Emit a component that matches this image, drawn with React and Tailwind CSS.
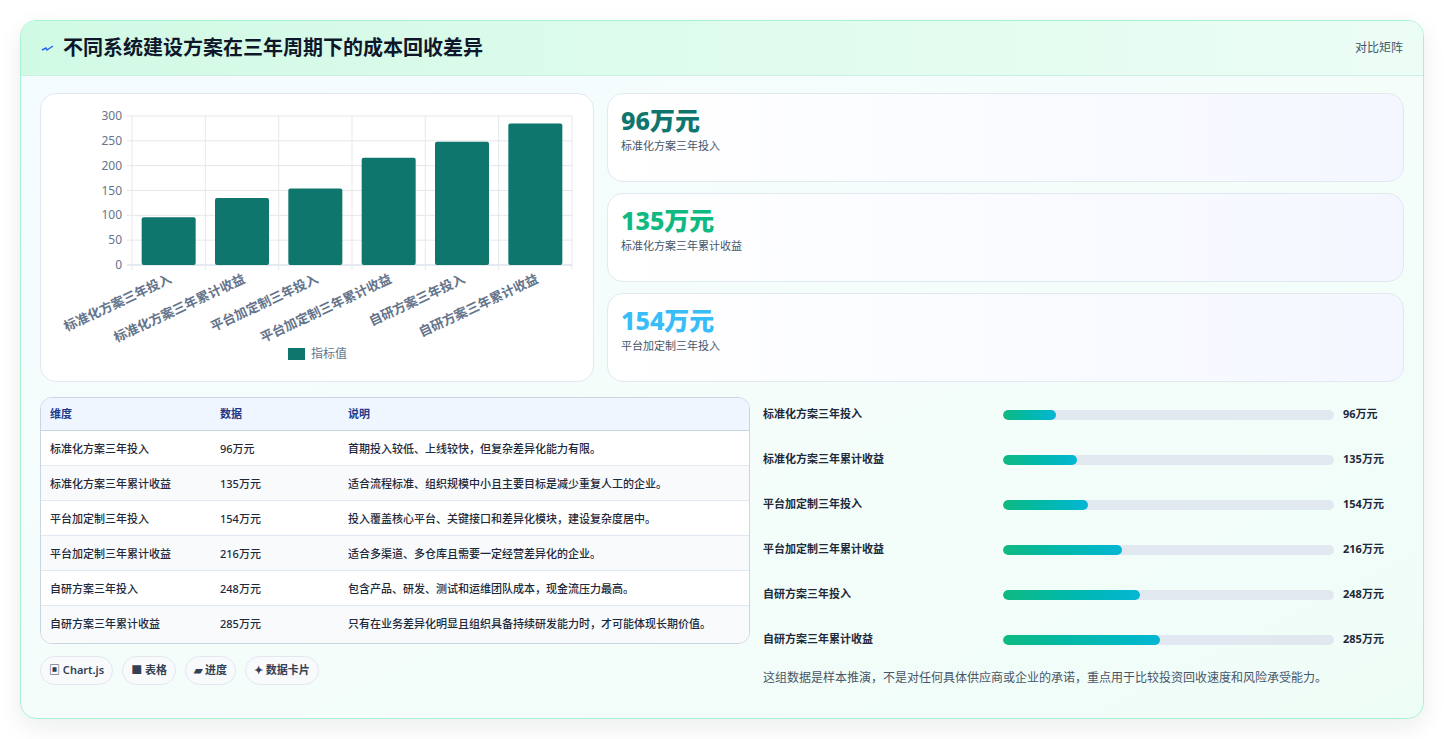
import React from "react";

const rows = [
  ["标准化方案三年投入", 96, "首期投入较低、上线较快，但复杂差异化能力有限。"],
  ["标准化方案三年累计收益", 135, "适合流程标准、组织规模中小且主要目标是减少重复人工的企业。"],
  ["平台加定制三年投入", 154, "投入覆盖核心平台、关键接口和差异化模块，建设复杂度居中。"],
  ["平台加定制三年累计收益", 216, "适合多渠道、多仓库且需要一定经营差异化的企业。"],
  ["自研方案三年投入", 248, "包含产品、研发、测试和运维团队成本，现金流压力最高。"],
  ["自研方案三年累计收益", 285, "只有在业务差异化明显且组织具备持续研发能力时，才可能体现长期价值。"],
];

function Chart() {
  const x0 = 91, x1 = 531, yTop = 22, yBot = 171;
  const step = (x1 - x0) / 6;
  const ys = [0, 50, 100, 150, 200, 250, 300];
  const yOf = (v) => yBot - (v / 300) * (yBot - yTop);
  return (
    <svg width="553" height="288" className="block">
      {ys.map((v) => (
        <g key={v}>
          <line x1={x0 - 5} x2={x1} y1={yOf(v)} y2={yOf(v)} stroke={v === 0 ? "#cbd5e1" : "#e5e7eb"} />
          <text x={x0 - 10} y={yOf(v) + 4} textAnchor="end" fontSize="12" fill="#64748b">{v}</text>
        </g>
      ))}
      {Array.from({ length: 7 }).map((_, i) => (
        <line key={i} x1={x0 + i * step} x2={x0 + i * step} y1={yTop} y2={yBot + 5} stroke="#e5e7eb" />
      ))}
      {rows.map((r, i) => {
        const cx = x0 + step * (i + 0.5);
        const y = yOf(r[1]);
        return (
          <g key={i}>
            <rect x={cx - 27} y={y} width="54" height={yBot - y} rx="2" fill="#0f766e" />
            <text transform={`translate(${cx + 4},${yBot + 17}) rotate(-25)`} textAnchor="end" fontSize="13" fontWeight="600" fill="#64748b">{r[0]}</text>
          </g>
        );
      })}
      <rect x="247" y="254" width="17" height="12" fill="#0f766e" />
      <text x="270" y="264" fontSize="12" fill="#64748b">指标值</text>
    </svg>
  );
}

function Stat({ v, label, color }) {
  return (
    <div className="flex-1 rounded-2xl border border-[#e2e8f0] bg-gradient-to-r from-white to-[#f4f7ff] px-[13px] pt-[9px]">
      <div className={`text-[25px] font-extrabold leading-[34px] ${color}`}>{v}</div>
      <div className="text-[11px] text-[#475569] mt-[1px]">{label}</div>
    </div>
  );
}

export default function App() {
  return (
    <div className="w-[1444px] h-[739px] bg-white p-[20px]" style={{ fontFamily: '"Noto Sans","Noto Sans CJK SC",sans-serif' }}>
      <div className="h-[699px] rounded-2xl border border-[#a7f3d0] bg-gradient-to-br from-[#f3fbff] via-[#f5fdfb] to-[#effdf7] shadow-[0_8px_24px_rgba(15,23,42,0.08)] overflow-hidden">
        <div className="h-[55px] flex items-center justify-between px-[20px] bg-gradient-to-r from-[#d1fae5] to-[#ecfdf5] border-b border-[#ccf0e4]">
          <div className="flex items-center gap-[9px]">
            <svg width="13" height="10" viewBox="0 0 13 10"><path d="M1 7 L5 5 L6 7 L12 3" stroke="#2563eb" strokeWidth="1.4" fill="none" /></svg>
            <span className="text-[20px] font-bold text-[#0f172a]">不同系统建设方案在三年周期下的成本回收差异</span>
          </div>
          <span className="text-[12px] text-[#475569]">对比矩阵</span>
        </div>
        <div className="px-[19px] pt-[17px]">
          <div className="flex gap-[13px] h-[289px]">
            <div className="w-[554px] rounded-2xl border border-[#e2e8f0] bg-white overflow-hidden">
              <Chart />
            </div>
            <div className="flex-1 flex flex-col gap-[11px]">
              <Stat v="96万元" label="标准化方案三年投入" color="text-[#0f766e]" />
              <Stat v="135万元" label="标准化方案三年累计收益" color="text-[#10b981]" />
              <Stat v="154万元" label="平台加定制三年投入" color="text-[#38bdf8]" />
            </div>
          </div>
          <div className="flex gap-[13px] mt-[15px]">
            <div className="w-[710px]">
              <div className="rounded-xl border border-[#cbd5e1] bg-white overflow-hidden text-[11px] font-medium text-[#1e293b]">
                <div className="flex h-[33px] items-center bg-[#eff6ff] border-b border-[#cbd5e1] font-semibold text-[#1e3a8a]">
                  <div className="w-[179px] pl-[9px]">维度</div>
                  <div className="w-[128px]">数据</div>
                  <div className="flex-1">说明</div>
                </div>
                {rows.map((r, i) => (
                  <div key={i} className={`flex items-start py-[10px] ${i < 5 ? "border-b border-[#e2e8f0] h-[35px]" : ""} ${i % 2 ? "bg-[#f8fafc]" : "bg-white"}`}>
                    <div className="w-[179px] pl-[9px] leading-[15px]">{r[0]}</div>
                    <div className="w-[128px] leading-[15px]">{r[1]}万元</div>
                    <div className="flex-1 pr-[28px] leading-[18px] -mt-[1px]">{r[2]}</div>
                  </div>
                ))}
              </div>
              <div className="flex gap-[9px] mt-[12px] text-[11px] text-[#334155] font-semibold">
                {["▣ Chart.js", "■ 表格", "▰ 进度", "✦ 数据卡片"].map((t) => (
                  <span key={t} className="rounded-full border border-[#e2e8f0] bg-[#f8fafc] px-[8px] h-[29px] flex items-center">{t}</span>
                ))}
              </div>
            </div>
            <div className="flex-1 -mt-[5px]">
              {rows.map((r, i) => (
                <div key={i} className="flex items-center h-[45px] text-[11px] font-semibold text-[#1e293b]">
                  <div className="w-[240px]">{r[0]}</div>
                  <div className="w-[331px] h-[10px] rounded-full bg-[#e2e8f0] overflow-hidden">
                    <div className="h-full rounded-full bg-gradient-to-r from-[#10b981] to-[#06b6d4]" style={{ width: `${(r[1] / 600) * 100}%` }} />
                  </div>
                  <div className="pl-[9px] font-bold">{r[1]}万元</div>
                </div>
              ))}
              <div className="mt-[7px] text-[12px] text-[#475569]">这组数据是样本推演，不是对任何具体供应商或企业的承诺，重点用于比较投资回收速度和风险承受能力。</div>
            </div>
          </div>
        </div>
      </div>
    </div>
  );
}
